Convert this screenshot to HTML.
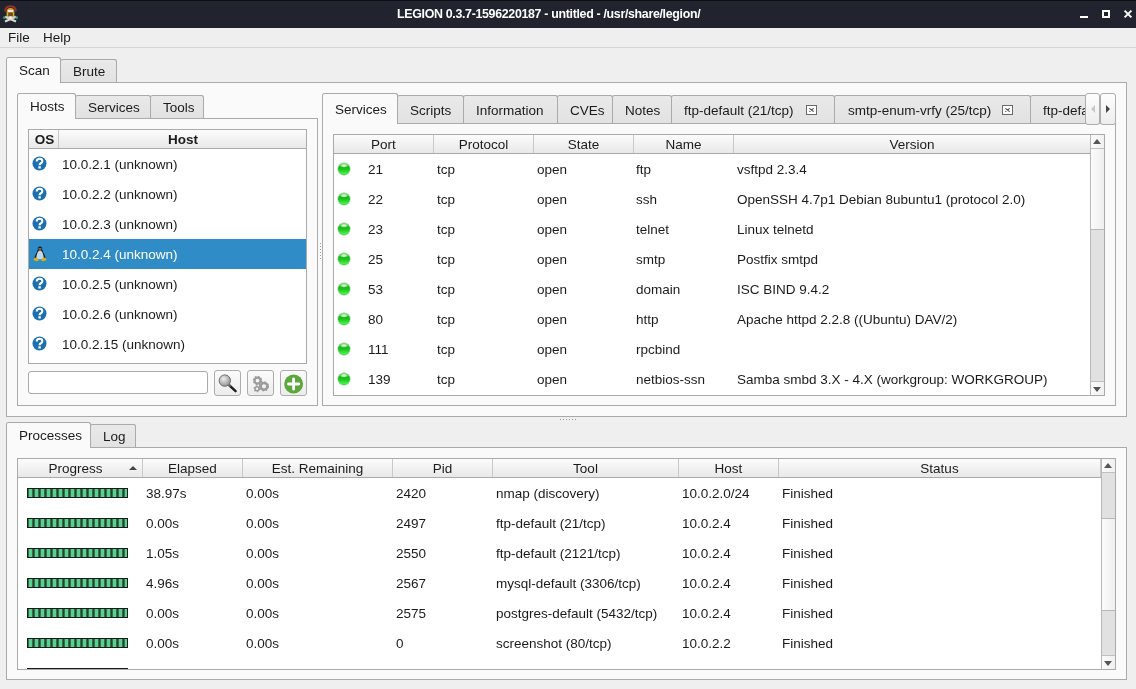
<!DOCTYPE html>
<html><head><meta charset="utf-8">
<style>
*{box-sizing:border-box;margin:0;padding:0}
html,body{width:1136px;height:689px;overflow:hidden;background:#efefef;font-family:"Liberation Sans",sans-serif;font-size:13.5px;letter-spacing:0px;color:#1b1b1b}
.a{position:absolute}
body{will-change:transform}
.t{position:absolute;white-space:nowrap;line-height:30px;margin-top:1px}
#title{left:0;top:0;width:1136px;height:28px;background:#21242e;border-top:1px solid #101217}
.panel{position:absolute;background:#fafafa;border:1px solid #aaa}
.tab{position:absolute;border:1px solid #aaa;border-bottom:none;border-radius:2.5px 2.5px 0 0;background:linear-gradient(#e9e9e9,#e2e2e2)}
.tab.sel{background:#fafafa;z-index:2}
.tab span{position:absolute;white-space:nowrap;margin-top:1px}
.tbl{position:absolute;background:#fff;border:1px solid #aaa;overflow:hidden}
.hdr{position:absolute;left:0;top:0;right:0;height:19px;background:linear-gradient(#fcfcfc,#e8e8e8);border-bottom:1px solid #aaa}
.hc{position:absolute;top:0;height:18px;line-height:20px;text-align:center;border-right:1px solid #c8c8c8;white-space:nowrap}
.sb{position:absolute;background:#e1e1e1;border-left:1px solid #b8b8b8}
.sbh{position:absolute;left:0;right:0;background:linear-gradient(90deg,#fbfbfb,#efefef);border-top:1px solid #b8b8b8;border-bottom:1px solid #b8b8b8}
.btn{position:absolute;border:1px solid #adadad;border-radius:3px;background:linear-gradient(#fbfbfb,#ececec)}
</style></head><body>
<div class="a" style="left:0;top:0;width:1136px;height:28px;background:#21242e;border-top:1px solid #0e1014"></div>
<svg class="a" style="left:0;top:0" width="22" height="26" viewBox="0 0 22 26">
<path d="M5.2 11.5 Q5.2 6.3 10.5 6.3 Q15.8 6.3 15.8 11.5" stroke="#9c2f24" stroke-width="2" fill="none"/>
<path d="M6.6 12 Q6.6 8 10.5 8 Q14.4 8 14.4 12 V17 H6.6Z" fill="#d6a92c"/>
<rect x="8" y="10" width="5" height="2" fill="#e8e8e8"/>
<rect x="8.2" y="12.5" width="4.6" height="3.6" fill="#6e4a22"/>
<path d="M5 21.5 L16 16.8 M16 21.5 L5 16.8" stroke="#d8d8d8" stroke-width="2.2"/>
<circle cx="10.5" cy="17.6" r="1.4" fill="#f4f4f4"/>
<circle cx="4.3" cy="17.6" r="1.3" fill="#3c9c88"/><circle cx="16.7" cy="17.6" r="1.3" fill="#3c9c88"/>
</svg>
<div class="a" style="left:397px;top:0;height:28px;line-height:28px;white-space:nowrap;color:#fff;font-weight:bold;font-size:12.4px;letter-spacing:-0.32px">LEGION 0.3.7-1596220187 - untitled - /usr/share/legion/</div>
<div class="a" style="left:1080px;top:15.5px;width:8px;height:2.6px;background:#fff"></div>
<div class="a" style="left:1102px;top:10px;width:8px;height:8px;border:2px solid #fff"></div>
<svg class="a" style="left:1123px;top:9px" width="10" height="10" viewBox="0 0 10 10"><path d="M1.6 1.6 L8.4 8.4 M8.4 1.6 L1.6 8.4" stroke="#fff" stroke-width="1.9"/></svg>
<div class="t" style="left:8px;top:27px;line-height:19px">File</div>
<div class="t" style="left:43px;top:27px;line-height:19px">Help</div>
<div class="a" style="left:0;top:47px;width:1136px;height:1px;background:#d6d6d6"></div>
<div class="panel" style="left:6px;top:82px;width:1121px;height:335px;"></div>
<div class="tab" style="left:60px;top:59px;width:57px;height:23px;"><span style="left:12px;top:0;line-height:22px">Brute</span></div>
<div class="tab sel" style="left:6px;top:57px;width:55px;height:26px;"><span style="left:12px;top:0;line-height:24px">Scan</span></div>
<div class="panel" style="left:17px;top:118px;width:301px;height:288px;"></div>
<div class="tab" style="left:75px;top:95px;width:76px;height:23px;"><span style="left:12px;top:0;line-height:22px">Services</span></div>
<div class="tab" style="left:150px;top:95px;width:54px;height:23px;"><span style="left:12px;top:0;line-height:22px">Tools</span></div>
<div class="tab sel" style="left:17px;top:93px;width:59px;height:26px;"><span style="left:12px;top:0;line-height:24px">Hosts</span></div>
<div class="tbl" style="left:28px;top:129px;width:279px;height:235px;">
<div class="hdr"><div class="hc" style="left:0;width:30px;font-weight:bold;padding-left:2px">OS</div><div class="hc" style="left:30px;width:248px;font-weight:bold;border-right:none">Host</div></div>
<div class="a" style="left:0;top:19px;width:30px;height:30px"><svg class="a" style="left:3px;top:7px" width="15" height="15" viewBox="0 0 15 15"><circle cx="7.5" cy="7.5" r="7" fill="#1d70b0"/><path d="M4.7 5.6 Q4.7 2.8 7.5 2.8 Q10.3 2.8 10.3 5.2 Q10.3 6.6 8.8 7.3 Q7.6 7.9 7.6 9.2" stroke="#fff" stroke-width="2.1" fill="none"/><rect x="6.4" y="10.3" width="2.4" height="2.2" fill="#fff"/></svg></div>
<div class="t" style="left:33px;top:19px">10.0.2.1 (unknown)</div>
<div class="a" style="left:0;top:49px;width:30px;height:30px"><svg class="a" style="left:3px;top:7px" width="15" height="15" viewBox="0 0 15 15"><circle cx="7.5" cy="7.5" r="7" fill="#1d70b0"/><path d="M4.7 5.6 Q4.7 2.8 7.5 2.8 Q10.3 2.8 10.3 5.2 Q10.3 6.6 8.8 7.3 Q7.6 7.9 7.6 9.2" stroke="#fff" stroke-width="2.1" fill="none"/><rect x="6.4" y="10.3" width="2.4" height="2.2" fill="#fff"/></svg></div>
<div class="t" style="left:33px;top:49px">10.0.2.2 (unknown)</div>
<div class="a" style="left:0;top:79px;width:30px;height:30px"><svg class="a" style="left:3px;top:7px" width="15" height="15" viewBox="0 0 15 15"><circle cx="7.5" cy="7.5" r="7" fill="#1d70b0"/><path d="M4.7 5.6 Q4.7 2.8 7.5 2.8 Q10.3 2.8 10.3 5.2 Q10.3 6.6 8.8 7.3 Q7.6 7.9 7.6 9.2" stroke="#fff" stroke-width="2.1" fill="none"/><rect x="6.4" y="10.3" width="2.4" height="2.2" fill="#fff"/></svg></div>
<div class="t" style="left:33px;top:79px">10.0.2.3 (unknown)</div>
<div class="a" style="left:0;top:109px;width:277px;height:30px;background:#308cc6"></div>
<div class="a" style="left:0;top:109px;width:30px;height:30px"><svg class="a" style="left:3.5px;top:7px" width="14" height="16" viewBox="0 0 14 16"><path d="M7 0.6 Q9.3 0.6 9.3 3.4 Q9.5 5.6 11.4 8.6 Q13 11.4 12 13.6 L2 13.6 Q1 11.4 2.6 8.6 Q4.5 5.6 4.7 3.4 Q4.7 0.6 7 0.6Z" fill="#161c24"/><path d="M7 4.6 Q9 4.6 10 8.2 Q11.2 11.2 10.2 13.6 L3.8 13.6 Q2.8 11.2 4 8.2 Q5 4.6 7 4.6Z" fill="#c4d8ea"/><circle cx="6.1" cy="2.9" r="0.6" fill="#ddd"/><circle cx="7.9" cy="2.9" r="0.6" fill="#ddd"/><path d="M6 3.9 L7 4.8 L8 3.9Z" fill="#d8a820"/><path d="M0.4 14 Q1 11 3.4 11.6 Q5.4 12.4 5.6 14.8 Q3 15.8 0.4 14Z" fill="#d4b01a"/><path d="M13.6 14 Q13 11 10.6 11.6 Q8.6 12.4 8.4 14.8 Q11 15.8 13.6 14Z" fill="#d4b01a"/></svg></div>
<div class="t" style="left:33px;top:109px;color:#fff">10.0.2.4 (unknown)</div>
<div class="a" style="left:0;top:139px;width:30px;height:30px"><svg class="a" style="left:3px;top:7px" width="15" height="15" viewBox="0 0 15 15"><circle cx="7.5" cy="7.5" r="7" fill="#1d70b0"/><path d="M4.7 5.6 Q4.7 2.8 7.5 2.8 Q10.3 2.8 10.3 5.2 Q10.3 6.6 8.8 7.3 Q7.6 7.9 7.6 9.2" stroke="#fff" stroke-width="2.1" fill="none"/><rect x="6.4" y="10.3" width="2.4" height="2.2" fill="#fff"/></svg></div>
<div class="t" style="left:33px;top:139px">10.0.2.5 (unknown)</div>
<div class="a" style="left:0;top:169px;width:30px;height:30px"><svg class="a" style="left:3px;top:7px" width="15" height="15" viewBox="0 0 15 15"><circle cx="7.5" cy="7.5" r="7" fill="#1d70b0"/><path d="M4.7 5.6 Q4.7 2.8 7.5 2.8 Q10.3 2.8 10.3 5.2 Q10.3 6.6 8.8 7.3 Q7.6 7.9 7.6 9.2" stroke="#fff" stroke-width="2.1" fill="none"/><rect x="6.4" y="10.3" width="2.4" height="2.2" fill="#fff"/></svg></div>
<div class="t" style="left:33px;top:169px">10.0.2.6 (unknown)</div>
<div class="a" style="left:0;top:199px;width:30px;height:30px"><svg class="a" style="left:3px;top:7px" width="15" height="15" viewBox="0 0 15 15"><circle cx="7.5" cy="7.5" r="7" fill="#1d70b0"/><path d="M4.7 5.6 Q4.7 2.8 7.5 2.8 Q10.3 2.8 10.3 5.2 Q10.3 6.6 8.8 7.3 Q7.6 7.9 7.6 9.2" stroke="#fff" stroke-width="2.1" fill="none"/><rect x="6.4" y="10.3" width="2.4" height="2.2" fill="#fff"/></svg></div>
<div class="t" style="left:33px;top:199px">10.0.2.15 (unknown)</div>
</div>
<div class="a" style="left:28px;top:371px;width:180px;height:23px;background:#fff;border:1px solid #aaa;border-radius:3px"></div>
<div class="btn" style="left:214px;top:370px;width:27px;height:26px;">
<svg class="a" style="left:3px;top:3px" width="20" height="20" viewBox="0 0 20 20"><defs><radialGradient id="lg" cx="0.4" cy="0.35" r="0.7"><stop offset="0" stop-color="#eee"/><stop offset="1" stop-color="#8c8c8c"/></radialGradient></defs><path d="M11.5 11.5 L17.6 17.2" stroke="#1e1e1e" stroke-width="2.4" stroke-linecap="round"/><path d="M10.5 10.5 L12.5 12.5" stroke="#666" stroke-width="2.2"/><circle cx="6.8" cy="6.6" r="5.7" fill="url(#lg)" stroke="#6e6e6e" stroke-width="1"/></svg></div>
<div class="btn" style="left:247px;top:370px;width:27px;height:26px;">
<svg class="a" style="left:4px;top:4px" width="18" height="18" viewBox="0 0 18 18"><circle cx="5.5" cy="5.5" r="3.0" fill="none" stroke="#9c9c9c" stroke-width="2.25"/><circle cx="5.5" cy="5.5" r="3.6" fill="none" stroke="#9c9c9c" stroke-width="2.2" stroke-dasharray="1.41 1.41"/><circle cx="12" cy="11.3" r="3.4" fill="none" stroke="#9c9c9c" stroke-width="2.55"/><circle cx="12" cy="11.3" r="4.0" fill="none" stroke="#9c9c9c" stroke-width="2.2" stroke-dasharray="1.57 1.57"/><circle cx="5" cy="13.8" r="2.0" fill="none" stroke="#9c9c9c" stroke-width="1.50"/><circle cx="5" cy="13.8" r="2.6" fill="none" stroke="#9c9c9c" stroke-width="1.8" stroke-dasharray="1.36 1.36"/></svg></div>
<div class="btn" style="left:280px;top:370px;width:27px;height:26px;">
<svg class="a" style="left:3px;top:3px" width="20" height="20" viewBox="0 0 20 20"><circle cx="9.6" cy="10" r="9.4" fill="#5aa83b"/><path d="M9.6 4.8 V15.2 M4.4 10 H14.8" stroke="#fff" stroke-width="2.8" stroke-linecap="round"/></svg></div>
<div class="a" style="left:320px;top:243px;width:1px;height:1px;background:#999"></div>
<div class="a" style="left:320px;top:246px;width:1px;height:1px;background:#999"></div>
<div class="a" style="left:320px;top:249px;width:1px;height:1px;background:#999"></div>
<div class="a" style="left:320px;top:252px;width:1px;height:1px;background:#999"></div>
<div class="a" style="left:320px;top:255px;width:1px;height:1px;background:#999"></div>
<div class="a" style="left:320px;top:258px;width:1px;height:1px;background:#999"></div>
<div class="panel" style="left:322px;top:123px;width:794px;height:283px;"></div>
<div class="tab" style="left:397px;top:95px;width:67px;height:28px;"><span style="left:12px;top:0;line-height:27px">Scripts</span></div>
<div class="tab" style="left:463px;top:95px;width:95px;height:28px;"><span style="left:12px;top:0;line-height:27px">Information</span></div>
<div class="tab" style="left:557px;top:95px;width:56px;height:28px;"><span style="left:12px;top:0;line-height:27px">CVEs</span></div>
<div class="tab" style="left:612px;top:95px;width:60px;height:28px;"><span style="left:12px;top:0;line-height:27px">Notes</span></div>
<div class="tab" style="left:671px;top:95px;width:164px;height:28px;"><span style="left:12px;top:0;line-height:27px">ftp-default (21/tcp)</span></div>
<div class="a" style="left:806px;top:105px;width:11px;height:10px;border:1px solid #6a6a6a;background:#fff;z-index:3"><svg class="a" style="left:2px;top:2px" width="5" height="4" viewBox="0 0 5 4"><path d="M0.3 0.3 L4.7 3.7 M4.7 0.3 L0.3 3.7" stroke="#555" stroke-width="1.1"/></svg></div>
<div class="tab" style="left:834px;top:95px;width:197px;height:28px;"><span style="left:13px;top:0;line-height:27px">smtp-enum-vrfy (25/tcp)</span></div>
<div class="a" style="left:1002px;top:105px;width:11px;height:10px;border:1px solid #6a6a6a;background:#fff;z-index:3"><svg class="a" style="left:2px;top:2px" width="5" height="4" viewBox="0 0 5 4"><path d="M0.3 0.3 L4.7 3.7 M4.7 0.3 L0.3 3.7" stroke="#555" stroke-width="1.1"/></svg></div>
<div class="a" style="left:1030px;top:95px;width:55px;height:28px;overflow:hidden"><div class="tab" style="left:0px;top:0px;width:81px;height:28px;"><span style="left:12px;top:0;line-height:27px">ftp-default (2121/tcp)</span></div></div>
<div class="tab sel" style="left:322px;top:93px;width:76px;height:31px;"><span style="left:12px;top:0;line-height:29px">Services</span></div>
<div class="btn" style="left:1085px;top:93px;width:15px;height:32px;border-radius:3px;background:linear-gradient(#fdfdfd,#eeeeee)"><div class="a" style="left:5px;top:11px;width:0;height:0;border-top:4px solid transparent;border-bottom:4px solid transparent;border-right:4px solid #c8c8c8"></div></div>
<div class="btn" style="left:1100px;top:93px;width:16px;height:32px;border-radius:3px;background:linear-gradient(#fdfdfd,#eeeeee)"><div class="a" style="left:5px;top:11px;width:0;height:0;border-top:4px solid transparent;border-bottom:4px solid transparent;border-left:4px solid #444"></div></div>
<div class="tbl" style="left:333px;top:134px;width:772px;height:262px;">
<div class="hdr"><div class="hc" style="left:0px;width:100px">Port</div><div class="hc" style="left:100px;width:100px">Protocol</div><div class="hc" style="left:200px;width:100px">State</div><div class="hc" style="left:300px;width:100px">Name</div><div class="hc" style="left:400px;width:357px">Version</div></div>
<div class="a" style="left:0;top:19px;width:30px;height:30px"><div class="a" style="left:4px;top:9px;width:12px;height:12px;border-radius:50%;background:radial-gradient(ellipse 4px 2px at 50% 22%,rgba(235,255,230,0.95) 0,rgba(235,255,230,0.6) 60%,rgba(255,255,255,0) 100%),linear-gradient(#7ad870 0,#18b818 35%,#1cc81c 55%,#4cf04c 90%,#30c030 100%);box-shadow:0 0 0 0.5px rgba(30,120,30,0.5)"></div></div>
<div class="t" style="left:34px;top:19px">21</div>
<div class="t" style="left:103px;top:19px">tcp</div>
<div class="t" style="left:203px;top:19px">open</div>
<div class="t" style="left:302px;top:19px">ftp</div>
<div class="t" style="left:403px;top:19px">vsftpd 2.3.4</div>
<div class="a" style="left:0;top:49px;width:30px;height:30px"><div class="a" style="left:4px;top:9px;width:12px;height:12px;border-radius:50%;background:radial-gradient(ellipse 4px 2px at 50% 22%,rgba(235,255,230,0.95) 0,rgba(235,255,230,0.6) 60%,rgba(255,255,255,0) 100%),linear-gradient(#7ad870 0,#18b818 35%,#1cc81c 55%,#4cf04c 90%,#30c030 100%);box-shadow:0 0 0 0.5px rgba(30,120,30,0.5)"></div></div>
<div class="t" style="left:34px;top:49px">22</div>
<div class="t" style="left:103px;top:49px">tcp</div>
<div class="t" style="left:203px;top:49px">open</div>
<div class="t" style="left:302px;top:49px">ssh</div>
<div class="t" style="left:403px;top:49px">OpenSSH 4.7p1 Debian 8ubuntu1 (protocol 2.0)</div>
<div class="a" style="left:0;top:79px;width:30px;height:30px"><div class="a" style="left:4px;top:9px;width:12px;height:12px;border-radius:50%;background:radial-gradient(ellipse 4px 2px at 50% 22%,rgba(235,255,230,0.95) 0,rgba(235,255,230,0.6) 60%,rgba(255,255,255,0) 100%),linear-gradient(#7ad870 0,#18b818 35%,#1cc81c 55%,#4cf04c 90%,#30c030 100%);box-shadow:0 0 0 0.5px rgba(30,120,30,0.5)"></div></div>
<div class="t" style="left:34px;top:79px">23</div>
<div class="t" style="left:103px;top:79px">tcp</div>
<div class="t" style="left:203px;top:79px">open</div>
<div class="t" style="left:302px;top:79px">telnet</div>
<div class="t" style="left:403px;top:79px">Linux telnetd</div>
<div class="a" style="left:0;top:109px;width:30px;height:30px"><div class="a" style="left:4px;top:9px;width:12px;height:12px;border-radius:50%;background:radial-gradient(ellipse 4px 2px at 50% 22%,rgba(235,255,230,0.95) 0,rgba(235,255,230,0.6) 60%,rgba(255,255,255,0) 100%),linear-gradient(#7ad870 0,#18b818 35%,#1cc81c 55%,#4cf04c 90%,#30c030 100%);box-shadow:0 0 0 0.5px rgba(30,120,30,0.5)"></div></div>
<div class="t" style="left:34px;top:109px">25</div>
<div class="t" style="left:103px;top:109px">tcp</div>
<div class="t" style="left:203px;top:109px">open</div>
<div class="t" style="left:302px;top:109px">smtp</div>
<div class="t" style="left:403px;top:109px">Postfix smtpd</div>
<div class="a" style="left:0;top:139px;width:30px;height:30px"><div class="a" style="left:4px;top:9px;width:12px;height:12px;border-radius:50%;background:radial-gradient(ellipse 4px 2px at 50% 22%,rgba(235,255,230,0.95) 0,rgba(235,255,230,0.6) 60%,rgba(255,255,255,0) 100%),linear-gradient(#7ad870 0,#18b818 35%,#1cc81c 55%,#4cf04c 90%,#30c030 100%);box-shadow:0 0 0 0.5px rgba(30,120,30,0.5)"></div></div>
<div class="t" style="left:34px;top:139px">53</div>
<div class="t" style="left:103px;top:139px">tcp</div>
<div class="t" style="left:203px;top:139px">open</div>
<div class="t" style="left:302px;top:139px">domain</div>
<div class="t" style="left:403px;top:139px">ISC BIND 9.4.2</div>
<div class="a" style="left:0;top:169px;width:30px;height:30px"><div class="a" style="left:4px;top:9px;width:12px;height:12px;border-radius:50%;background:radial-gradient(ellipse 4px 2px at 50% 22%,rgba(235,255,230,0.95) 0,rgba(235,255,230,0.6) 60%,rgba(255,255,255,0) 100%),linear-gradient(#7ad870 0,#18b818 35%,#1cc81c 55%,#4cf04c 90%,#30c030 100%);box-shadow:0 0 0 0.5px rgba(30,120,30,0.5)"></div></div>
<div class="t" style="left:34px;top:169px">80</div>
<div class="t" style="left:103px;top:169px">tcp</div>
<div class="t" style="left:203px;top:169px">open</div>
<div class="t" style="left:302px;top:169px">http</div>
<div class="t" style="left:403px;top:169px">Apache httpd 2.2.8 ((Ubuntu) DAV/2)</div>
<div class="a" style="left:0;top:199px;width:30px;height:30px"><div class="a" style="left:4px;top:9px;width:12px;height:12px;border-radius:50%;background:radial-gradient(ellipse 4px 2px at 50% 22%,rgba(235,255,230,0.95) 0,rgba(235,255,230,0.6) 60%,rgba(255,255,255,0) 100%),linear-gradient(#7ad870 0,#18b818 35%,#1cc81c 55%,#4cf04c 90%,#30c030 100%);box-shadow:0 0 0 0.5px rgba(30,120,30,0.5)"></div></div>
<div class="t" style="left:34px;top:199px">111</div>
<div class="t" style="left:103px;top:199px">tcp</div>
<div class="t" style="left:203px;top:199px">open</div>
<div class="t" style="left:302px;top:199px">rpcbind</div>
<div class="t" style="left:403px;top:199px"></div>
<div class="a" style="left:0;top:229px;width:30px;height:30px"><div class="a" style="left:4px;top:9px;width:12px;height:12px;border-radius:50%;background:radial-gradient(ellipse 4px 2px at 50% 22%,rgba(235,255,230,0.95) 0,rgba(235,255,230,0.6) 60%,rgba(255,255,255,0) 100%),linear-gradient(#7ad870 0,#18b818 35%,#1cc81c 55%,#4cf04c 90%,#30c030 100%);box-shadow:0 0 0 0.5px rgba(30,120,30,0.5)"></div></div>
<div class="t" style="left:34px;top:229px">139</div>
<div class="t" style="left:103px;top:229px">tcp</div>
<div class="t" style="left:203px;top:229px">open</div>
<div class="t" style="left:302px;top:229px">netbios-ssn</div>
<div class="t" style="left:403px;top:229px">Samba smbd 3.X - 4.X (workgroup: WORKGROUP)</div>
<div class="sb" style="left:756px;top:0;width:14px;height:260px">
<div class="a" style="left:0;top:0;width:13px;height:14px;background:linear-gradient(90deg,#fbfbfb,#f0f0f0);border-bottom:1px solid #c0c0c0"><div class="a" style="left:2px;top:4px;width:0;height:0;border-left:4.5px solid transparent;border-right:4.5px solid transparent;border-bottom:5px solid #555"></div></div>
<div class="sbh" style="top:14px;height:81px;border-top:none"></div>
<div class="a" style="left:0;top:246px;width:13px;height:14px;background:linear-gradient(90deg,#fbfbfb,#f0f0f0);border-top:1px solid #c0c0c0"><div class="a" style="left:2px;top:5px;width:0;height:0;border-left:4.5px solid transparent;border-right:4.5px solid transparent;border-top:5px solid #555"></div></div>
</div>
</div>
<div class="a" style="left:560px;top:419px;width:1px;height:1px;background:#999"></div>
<div class="a" style="left:563px;top:419px;width:1px;height:1px;background:#999"></div>
<div class="a" style="left:566px;top:419px;width:1px;height:1px;background:#999"></div>
<div class="a" style="left:569px;top:419px;width:1px;height:1px;background:#999"></div>
<div class="a" style="left:572px;top:419px;width:1px;height:1px;background:#999"></div>
<div class="a" style="left:575px;top:419px;width:1px;height:1px;background:#999"></div>
<div class="panel" style="left:6px;top:447px;width:1121px;height:233px;"></div>
<div class="tab" style="left:90px;top:424px;width:46px;height:23px;"><span style="left:12px;top:0;line-height:22px">Log</span></div>
<div class="tab sel" style="left:6px;top:422px;width:85px;height:26px;"><span style="left:12px;top:0;line-height:24px">Processes</span></div>
<div class="tbl" style="left:17px;top:458px;width:1099px;height:212px;">
<div class="hdr"><div class="hc" style="left:0px;width:125px;padding-right:9px">Progress</div><div class="hc" style="left:125px;width:100px;">Elapsed</div><div class="hc" style="left:225px;width:150px;">Est. Remaining</div><div class="hc" style="left:375px;width:100px;">Pid</div><div class="hc" style="left:475px;width:186px;">Tool</div><div class="hc" style="left:661px;width:100px;">Host</div><div class="hc" style="left:761px;width:322px;">Status</div><div class="a" style="left:111px;top:7px;width:0;height:0;border-left:4px solid transparent;border-right:4px solid transparent;border-bottom:4px solid #444"></div></div>
<div class="a" style="left:0;top:19px;width:125px;height:30px"><div class="a" style="left:9px;top:10px;width:101px;height:10px;background:#1a1a1a;padding:1px"><div style="width:100%;height:100%;background:repeating-linear-gradient(90deg,#24402e 0,#58d08e 1.5px,#58d08e 3.5px,#24402e 5px,#24402e 6px)"></div></div></div>
<div class="t" style="left:128px;top:19px">38.97s</div>
<div class="t" style="left:228px;top:19px">0.00s</div>
<div class="t" style="left:378px;top:19px">2420</div>
<div class="t" style="left:478px;top:19px">nmap (discovery)</div>
<div class="t" style="left:664px;top:19px">10.0.2.0/24</div>
<div class="t" style="left:764px;top:19px">Finished</div>
<div class="a" style="left:0;top:49px;width:125px;height:30px"><div class="a" style="left:9px;top:10px;width:101px;height:10px;background:#1a1a1a;padding:1px"><div style="width:100%;height:100%;background:repeating-linear-gradient(90deg,#24402e 0,#58d08e 1.5px,#58d08e 3.5px,#24402e 5px,#24402e 6px)"></div></div></div>
<div class="t" style="left:128px;top:49px">0.00s</div>
<div class="t" style="left:228px;top:49px">0.00s</div>
<div class="t" style="left:378px;top:49px">2497</div>
<div class="t" style="left:478px;top:49px">ftp-default (21/tcp)</div>
<div class="t" style="left:664px;top:49px">10.0.2.4</div>
<div class="t" style="left:764px;top:49px">Finished</div>
<div class="a" style="left:0;top:79px;width:125px;height:30px"><div class="a" style="left:9px;top:10px;width:101px;height:10px;background:#1a1a1a;padding:1px"><div style="width:100%;height:100%;background:repeating-linear-gradient(90deg,#24402e 0,#58d08e 1.5px,#58d08e 3.5px,#24402e 5px,#24402e 6px)"></div></div></div>
<div class="t" style="left:128px;top:79px">1.05s</div>
<div class="t" style="left:228px;top:79px">0.00s</div>
<div class="t" style="left:378px;top:79px">2550</div>
<div class="t" style="left:478px;top:79px">ftp-default (2121/tcp)</div>
<div class="t" style="left:664px;top:79px">10.0.2.4</div>
<div class="t" style="left:764px;top:79px">Finished</div>
<div class="a" style="left:0;top:109px;width:125px;height:30px"><div class="a" style="left:9px;top:10px;width:101px;height:10px;background:#1a1a1a;padding:1px"><div style="width:100%;height:100%;background:repeating-linear-gradient(90deg,#24402e 0,#58d08e 1.5px,#58d08e 3.5px,#24402e 5px,#24402e 6px)"></div></div></div>
<div class="t" style="left:128px;top:109px">4.96s</div>
<div class="t" style="left:228px;top:109px">0.00s</div>
<div class="t" style="left:378px;top:109px">2567</div>
<div class="t" style="left:478px;top:109px">mysql-default (3306/tcp)</div>
<div class="t" style="left:664px;top:109px">10.0.2.4</div>
<div class="t" style="left:764px;top:109px">Finished</div>
<div class="a" style="left:0;top:139px;width:125px;height:30px"><div class="a" style="left:9px;top:10px;width:101px;height:10px;background:#1a1a1a;padding:1px"><div style="width:100%;height:100%;background:repeating-linear-gradient(90deg,#24402e 0,#58d08e 1.5px,#58d08e 3.5px,#24402e 5px,#24402e 6px)"></div></div></div>
<div class="t" style="left:128px;top:139px">0.00s</div>
<div class="t" style="left:228px;top:139px">0.00s</div>
<div class="t" style="left:378px;top:139px">2575</div>
<div class="t" style="left:478px;top:139px">postgres-default (5432/tcp)</div>
<div class="t" style="left:664px;top:139px">10.0.2.4</div>
<div class="t" style="left:764px;top:139px">Finished</div>
<div class="a" style="left:0;top:169px;width:125px;height:30px"><div class="a" style="left:9px;top:10px;width:101px;height:10px;background:#1a1a1a;padding:1px"><div style="width:100%;height:100%;background:repeating-linear-gradient(90deg,#24402e 0,#58d08e 1.5px,#58d08e 3.5px,#24402e 5px,#24402e 6px)"></div></div></div>
<div class="t" style="left:128px;top:169px">0.00s</div>
<div class="t" style="left:228px;top:169px">0.00s</div>
<div class="t" style="left:378px;top:169px">0</div>
<div class="t" style="left:478px;top:169px">screenshot (80/tcp)</div>
<div class="t" style="left:664px;top:169px">10.0.2.2</div>
<div class="t" style="left:764px;top:169px">Finished</div>
<div class="a" style="left:0;top:199px;width:125px;height:30px"><div class="a" style="left:9px;top:10px;width:101px;height:10px;background:#1a1a1a;padding:1px"><div style="width:100%;height:100%;background:repeating-linear-gradient(90deg,#24402e 0,#58d08e 1.5px,#58d08e 3.5px,#24402e 5px,#24402e 6px)"></div></div></div>
<div class="t" style="left:128px;top:199px">0.00s</div>
<div class="t" style="left:228px;top:199px">0.00s</div>
<div class="t" style="left:378px;top:199px">2601</div>
<div class="t" style="left:478px;top:199px">smtp-enum-vrfy (25/tcp)</div>
<div class="t" style="left:664px;top:199px">10.0.2.4</div>
<div class="t" style="left:764px;top:199px">Finished</div>
<div class="sb" style="left:1083px;top:0;width:14px;height:210px">
<div class="a" style="left:0;top:0;width:13px;height:14px;background:linear-gradient(90deg,#fbfbfb,#f0f0f0);border-bottom:1px solid #c0c0c0"><div class="a" style="left:2px;top:4px;width:0;height:0;border-left:4.5px solid transparent;border-right:4.5px solid transparent;border-bottom:5px solid #555"></div></div>
<div class="sbh" style="top:59px;height:93px"></div>
<div class="a" style="left:0;top:196px;width:13px;height:14px;background:linear-gradient(90deg,#fbfbfb,#f0f0f0);border-top:1px solid #c0c0c0"><div class="a" style="left:2px;top:5px;width:0;height:0;border-left:4.5px solid transparent;border-right:4.5px solid transparent;border-top:5px solid #555"></div></div>
</div>
</div>
</body></html>
